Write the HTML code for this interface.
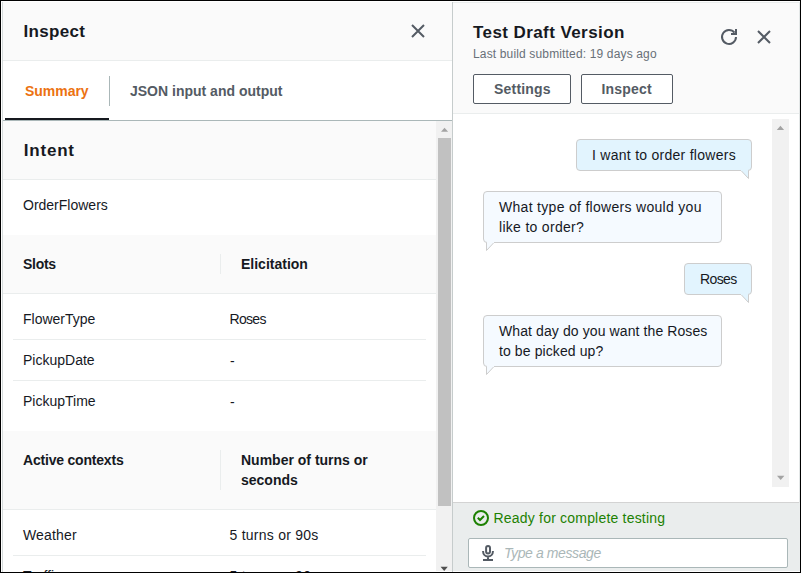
<!DOCTYPE html>
<html><head><meta charset="utf-8">
<style>
*{box-sizing:border-box;margin:0;padding:0}
html,body{width:801px;height:573px;overflow:hidden;background:#fff;font-family:"Liberation Sans",sans-serif;color:#16191f}
.a{position:absolute}
.t{position:absolute;white-space:nowrap;line-height:20px;font-size:14px}
.b{font-weight:bold}
svg{position:absolute;overflow:visible}
</style></head><body>
<!-- outer frame -->
<div class="a" style="left:0;top:0;width:801px;height:1px;background:#000"></div>
<div class="a" style="left:0;top:0;width:1px;height:573px;background:#000"></div>
<div class="a" style="left:800px;top:0;width:1px;height:573px;background:#000"></div>
<div class="a" style="left:0;top:572px;width:801px;height:1px;background:#000"></div>

<!-- ============ LEFT PANEL ============ -->
<div class="a" style="left:2px;top:2px;width:1px;height:570px;background:#d5dbdb"></div>
<!-- header -->
<div class="a" style="left:3px;top:2px;width:449px;height:58px;background:#fafafa"></div>
<div class="a" style="left:3px;top:60px;width:449px;height:1px;background:#eaeded"></div>
<div class="t b" style="left:23.5px;top:21px;font-size:17px;line-height:22px;letter-spacing:0.3px">Inspect</div>
<svg style="left:410px;top:23px" width="16" height="16" viewBox="0 0 16 16"><path d="M2 2L14 14M14 2L2 14" stroke="#545b64" stroke-width="2" fill="none"/></svg>

<!-- tabs -->
<div class="t b" style="left:25px;top:81.3px;color:#ec7211;letter-spacing:-0.03px">Summary</div>
<div class="a" style="left:109px;top:76px;width:1px;height:30px;background:#aab7b8"></div>
<div class="t b" style="left:130px;top:81px;color:#545b64">JSON input and output</div>
<div class="a" style="left:5px;top:118px;width:104px;height:2px;background:#16191f"></div>
<div class="a" style="left:3px;top:120px;width:449px;height:1px;background:#aab7b8"></div>

<!-- content -->
<div class="a" style="left:3px;top:121px;width:433px;height:58px;background:#fafafa"></div>
<div class="a" style="left:3px;top:179px;width:433px;height:1px;background:#eaeded"></div>
<div class="t b" style="left:23.8px;top:139.7px;font-size:17px;line-height:22px;letter-spacing:0.78px">Intent</div>
<div class="t" style="left:23px;top:195px">OrderFlowers</div>

<div class="a" style="left:3px;top:235px;width:433px;height:58px;background:#fafafa"></div>
<div class="a" style="left:3px;top:293px;width:433px;height:1px;background:#eaeded"></div>
<div class="t b" style="left:23px;top:254px;letter-spacing:-0.3px">Slots</div>
<div class="a" style="left:220px;top:254px;width:1px;height:20px;background:#eaeded"></div>
<div class="t b" style="left:241px;top:254px">Elicitation</div>

<div class="t" style="left:23px;top:309px">FlowerType</div>
<div class="t" style="left:229.5px;top:309px;letter-spacing:-0.7px">Roses</div>
<div class="a" style="left:13px;top:339px;width:413px;height:1px;background:#eaeded"></div>
<div class="t" style="left:23px;top:350px">PickupDate</div>
<div class="t" style="left:230px;top:351px;letter-spacing:0">-</div>
<div class="a" style="left:13px;top:380px;width:413px;height:1px;background:#eaeded"></div>
<div class="t" style="left:23px;top:391px">PickupTime</div>
<div class="t" style="left:230px;top:392px">-</div>

<div class="a" style="left:3px;top:431px;width:433px;height:78px;background:#fafafa"></div>
<div class="a" style="left:3px;top:509px;width:433px;height:1px;background:#eaeded"></div>
<div class="t b" style="left:23px;top:450px;letter-spacing:-0.2px">Active contexts</div>
<div class="a" style="left:220px;top:450px;width:1px;height:40px;background:#eaeded"></div>
<div class="t b" style="left:241px;top:450px">Number of turns or<br>seconds</div>

<div class="t" style="left:23px;top:525px;letter-spacing:0.15px">Weather</div>
<div class="t" style="left:229.5px;top:525px;letter-spacing:0.25px">5 turns or 90s</div>
<div class="a" style="left:13px;top:555px;width:413px;height:1px;background:#eaeded"></div>
<div class="t" style="left:23px;top:566px">Traffic</div>
<div class="t" style="left:229.5px;top:566px;letter-spacing:0.25px">5 turns or 90s</div>
<div class="a" style="left:453px;top:571px;width:347px;height:1px;background:#fff"></div>
<div class="a" style="left:0;top:572px;width:801px;height:1px;background:#000"></div>

<!-- left scrollbar -->
<div class="a" style="left:436px;top:121px;width:16px;height:450px;background:#f1f1f1"></div>
<div class="a" style="left:438px;top:138px;width:13px;height:368px;background:#c1c1c1"></div>
<svg style="left:436px;top:121px" width="16" height="16"><path d="M5 10.8L8.55 6.8L12.1 10.8Z" fill="#a3a3a3"/></svg>
<svg style="left:436px;top:555px" width="16" height="18"><path d="M4.6 11.8L11.8 11.8L8.2 15.9Z" fill="#505050"/></svg>

<!-- ============ RIGHT PANEL ============ -->
<div class="a" style="left:452px;top:2px;width:1px;height:570px;background:#c6cccc"></div>
<div class="a" style="left:453px;top:2px;width:346px;height:1px;background:#eaeded"></div>
<div class="a" style="left:453px;top:3px;width:346px;height:110px;background:#fafafa"></div>
<div class="a" style="left:453px;top:113px;width:346px;height:1px;background:#eaeded"></div>
<div class="a" style="left:799px;top:2px;width:1px;height:569px;background:#e3e7e7"></div>

<div class="t b" style="left:473px;top:22px;font-size:17px;line-height:22px;letter-spacing:0.42px">Test Draft Version</div>
<div class="t" style="left:473px;top:46px;font-size:12px;line-height:16px;color:#687078;letter-spacing:0.15px">Last build submitted: 19 days ago</div>
<svg style="left:721px;top:29px" width="16" height="16" viewBox="0 0 16 16"><path d="M15 8A7 7 0 1 1 13.5 3.6" stroke="#545b64" stroke-width="2" fill="none"/><path d="M10 5H15V0" stroke="#545b64" stroke-width="2" fill="none"/></svg>
<svg style="left:756px;top:29px" width="16" height="16" viewBox="0 0 16 16"><path d="M2 2L14 14M14 2L2 14" stroke="#545b64" stroke-width="2" fill="none"/></svg>

<div class="a" style="left:473px;top:74px;width:98px;height:30px;border:1px solid #545b64;border-radius:2px;background:#fff"></div>
<div class="t b" style="left:494px;top:79px;color:#545b64;letter-spacing:0.2px">Settings</div>
<div class="a" style="left:581px;top:74px;width:92px;height:30px;border:1px solid #545b64;border-radius:2px;background:#fff"></div>
<div class="t b" style="left:601.5px;top:79px;color:#545b64;letter-spacing:0.2px">Inspect</div>

<!-- chat -->
<div class="a" style="left:772px;top:119px;width:16.7px;height:368px;background:#f1f1f1"></div>
<svg style="left:772px;top:119px" width="16" height="16"><path d="M4.8 10.9L8.45 6.7L12.1 10.9Z" fill="#a3a3a3"/></svg>
<svg style="left:772px;top:471px" width="16" height="16"><path d="M5 4.7L12.4 4.7L8.7 9Z" fill="#a3a3a3"/></svg>

<!-- bubble 1 user -->
<div class="a" style="left:576px;top:139px;width:176px;height:32px;border:1px solid #cdcdcd;border-radius:4px;background:#e2f4fe"></div>
<svg style="left:740px;top:170px" width="12" height="10"><path d="M1 0.5L8.5 8.5V0.5" fill="#e2f4fe" stroke="#cdcdcd" stroke-width="1"/><rect x="1" y="0" width="7" height="1" fill="#e2f4fe"/></svg>
<div class="t" style="left:592px;top:145px;letter-spacing:0.27px">I want to order flowers</div>

<!-- bubble 2 bot -->
<div class="a" style="left:483px;top:191px;width:239px;height:52px;border:1px solid #cdcdcd;border-radius:4px;background:#f5faff"></div>
<svg style="left:483px;top:242px" width="14" height="10"><path d="M3.5 0.5V8.5L11 0.5" fill="#f5faff" stroke="#cdcdcd" stroke-width="1"/><rect x="4" y="0" width="7" height="1" fill="#f5faff"/></svg>
<div class="t" style="left:499px;top:197px;letter-spacing:0.3px">What type of flowers would you<br>like to order?</div>

<!-- bubble 3 user -->
<div class="a" style="left:684px;top:263px;width:68px;height:32px;border:1px solid #cdcdcd;border-radius:4px;background:#e2f4fe"></div>
<svg style="left:740px;top:294px" width="12" height="10"><path d="M1 0.5L8.5 8.5V0.5" fill="#e2f4fe" stroke="#cdcdcd" stroke-width="1"/><rect x="1" y="0" width="7" height="1" fill="#e2f4fe"/></svg>
<div class="t" style="left:700px;top:269px;letter-spacing:-0.6px">Roses</div>

<!-- bubble 4 bot -->
<div class="a" style="left:483px;top:315px;width:239px;height:52px;border:1px solid #cdcdcd;border-radius:4px;background:#f5faff"></div>
<svg style="left:483px;top:366px" width="14" height="10"><path d="M3.5 0.5V8.5L11 0.5" fill="#f5faff" stroke="#cdcdcd" stroke-width="1"/><rect x="4" y="0" width="7" height="1" fill="#f5faff"/></svg>
<div class="t" style="left:499px;top:321px;letter-spacing:0.1px">What day do you want the Roses<br>to be picked up?</div>

<!-- footer -->
<div class="a" style="left:453px;top:502px;width:346px;height:1px;background:#d3d3d3"></div>
<div class="a" style="left:453px;top:503px;width:347px;height:68px;background:#eaeded"></div>
<svg style="left:473px;top:510px" width="16" height="16" viewBox="0 0 16 16"><circle cx="8" cy="8" r="7" stroke="#1d8102" stroke-width="2" fill="none"/><path d="M4.8 7.8L7 10L11 6" stroke="#1d8102" stroke-width="2" fill="none"/></svg>
<div class="t" style="left:493.5px;top:508px;color:#1d8102;letter-spacing:0.2px">Ready for complete testing</div>

<div class="a" style="left:468px;top:538px;width:320px;height:30px;border:1px solid #aab7b8;border-radius:2px;background:#fff"></div>
<svg style="left:476px;top:540px" width="24" height="24" viewBox="0 0 24 24"><rect x="10.1" y="6" width="3.9" height="7.5" rx="1.95" stroke="#545b64" stroke-width="2" fill="none"/><path d="M7.1 10.9V11.6A4.9 4.9 0 0 0 16.9 11.6V10.9M12 16.5V19M7 19.9H17" stroke="#545b64" stroke-width="2" fill="none"/></svg>
<div class="t" style="left:504px;top:543px;font-style:italic;color:#aab7b8;letter-spacing:-0.4px">Type a message</div>
</body></html>
